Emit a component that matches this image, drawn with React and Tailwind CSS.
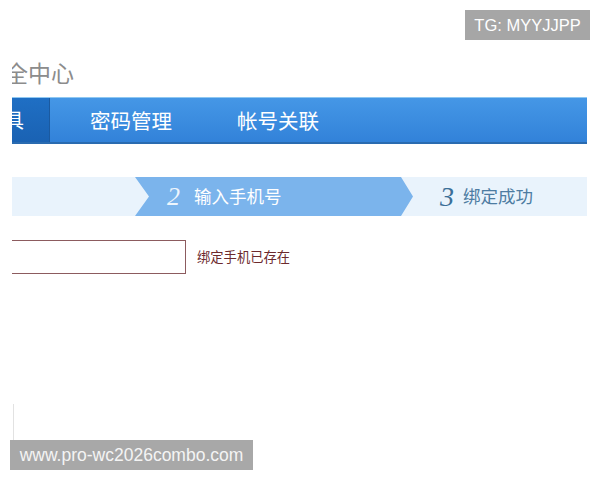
export default function App() {
  const cjk = "font-['Noto_Sans_CJK_SC','Noto_Sans',sans-serif]";

  return (
    <div className={`relative w-[600px] h-[480px] bg-white overflow-hidden ${cjk}`}>
      {/* clipped page content */}
      <div className="ml-3 w-[575px] overflow-hidden">
        {/* title */}
        <div className="h-[97px] pt-[55px]">
          <h1 className="ml-[-30px] text-[23px] leading-[34px] text-[#8c8c8c] whitespace-nowrap">
            安全中心
          </h1>
        </div>

        {/* nav bar */}
        <div className="flex h-[47px] items-stretch border-t border-t-[#8fc8f2] border-b-2 border-b-[#2a6bb0] bg-gradient-to-b from-[#4597e6] to-[#3282d9]">
          <div className="flex items-center ml-[-60px] w-[98px] justify-end pr-[25px] bg-gradient-to-b from-[#1f6fc4] to-[#1a62b3] border-r border-r-[#1b5aa0] text-white text-[20px] whitespace-nowrap">
            安全工具
          </div>
          <div className="flex items-center ml-[40px] text-white text-[20.5px] whitespace-nowrap">密码管理</div>
          <div className="flex items-center ml-[65px] text-white text-[20.5px] whitespace-nowrap">帐号关联</div>
        </div>

        {/* steps */}
        <div className="mt-[33px] flex h-[39px] bg-[#e9f3fc]">
          <div className="w-[136px] shrink-0 bg-[#e9f3fc] [clip-path:polygon(0_0,119px_0,135px_50%,119px_100%,0_100%)]" />
          <div className="ml-[-13px] w-[278px] shrink-0 flex items-center bg-[#7bb4ec] pl-[32px] [clip-path:polygon(0_0,266px_0,278px_50%,266px_100%,0_100%,14px_50%)]">
            <span className="font-['Liberation_Serif',serif] italic text-[26px] text-[#eef6fd] leading-none">2</span>
            <span className="ml-[14px] text-[17.5px] text-white">输入手机号</span>
          </div>
          <div className="flex items-center pl-[27px]">
            <span className="font-['Liberation_Serif',serif] italic text-[28px] text-[#3b6f98] leading-none">3</span>
            <span className="ml-[9px] text-[17.5px] text-[#4d7ca2]">绑定成功</span>
          </div>
        </div>

        {/* input row */}
        <div className="mt-[24px] flex items-center">
          <div className="ml-[-10px] w-[184px] h-[34px] border border-[#8c5b5e] bg-white" />
          <span className="ml-[11px] text-[13.3px] text-[#6d2a2d]">绑定手机已存在</span>
        </div>

        {/* faint left rule */}
        <div className="mt-[130px] ml-[1px] w-px h-[40px] bg-[#e2e2e2]" />
      </div>

      {/* watermarks */}
      <div className="absolute left-[465px] top-[10px] w-[125px] h-[30px] flex items-center justify-center bg-[#a6a6a6] text-white text-[16.5px] font-['Liberation_Sans',sans-serif]">
        TG: MYYJJPP
      </div>
      <div className="absolute left-[10px] top-[440px] w-[243px] h-[30px] flex items-center justify-center bg-[#a8a8a8] text-[#f4f4f4] text-[17.5px] font-['Liberation_Sans',sans-serif]">
        www.pro-wc2026combo.com
      </div>
    </div>
  );
}
